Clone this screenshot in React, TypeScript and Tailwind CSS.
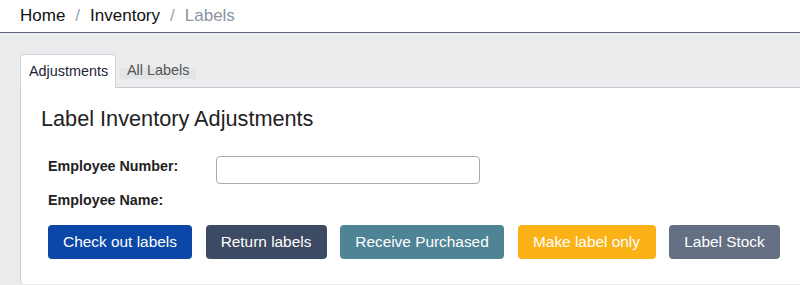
export default function App() {
  const buttons = [
    { label: "Check out labels", cls: "bg-[#0a47a6] w-[144px]" },
    { label: "Return labels", cls: "bg-[#3d4a63] w-[121px]" },
    { label: "Receive Purchased", cls: "bg-[#4f8396] w-[164px]" },
    { label: "Make label only", cls: "bg-[#fbb217] w-[138px]" },
    { label: "Label Stock", cls: "bg-[#656f84] w-[111px]" },
  ]

  return (
    <div className="w-[800px] h-[285px] overflow-hidden bg-[#ebecee] font-['Liberation_Sans',Arial,sans-serif]">
      <nav className="h-[33px] bg-white border-b border-[#5d6679] flex items-center pl-5 text-[17px] pb-px">
        <span className="text-[#111]">Home</span>
        <span className="text-[#9aa0aa] mx-[10px]">/</span>
        <span className="text-[#111]">Inventory</span>
        <span className="text-[#9aa0aa] mx-[10px]">/</span>
        <span className="text-[#8a93a3]">Labels</span>
      </nav>

      <div className="pl-5 pt-[21px]">
        <div className="flex items-end h-[34px] border-b border-[#c9cbcf]">
          <div className="h-[34px] w-[96px] -mb-px bg-white border border-b-0 border-[#d0d3d8] rounded-t-[4px] flex items-center pl-[8px] text-[14.4px] text-[#1e2535]">
            Adjustments
          </div>
          <div className="h-[33px] flex items-center pl-[4px] pb-[2px]">
            <span className="bg-[linear-gradient(to_bottom,transparent_40%,#e3e4e6_40%)] px-[7px] text-[14.4px] text-[#555] leading-[18px]">
              All Labels
            </span>
          </div>
        </div>

        <div className="h-[196px] bg-white border-l border-[#c9cbcf] rounded-bl-[4px] pl-[20px]">
          <h1 className="pt-[18px] text-[21.7px] leading-[26px] text-[#222]">
            Label Inventory Adjustments
          </h1>
          <div className="pl-[7px] pt-[24px]">
            <div className="flex items-start h-[28px]">
              <span className="w-[168px] text-[14.3px] leading-[20px] font-bold text-[#222]">
                Employee Number:
              </span>
              <input
                type="text"
                className="w-[264px] h-[28px] border border-[#aaa] rounded-[4px] bg-white outline-none px-2 text-sm"
              />
            </div>
            <div className="flex items-start h-[20px] mt-[6px]">
              <span className="w-[168px] text-[14.3px] leading-[20px] font-bold text-[#222]">
                Employee Name:
              </span>
            </div>
            <div className="flex gap-[13.5px] mt-[15px]">
              {buttons.map((b) => (
                <button
                  key={b.label}
                  className={`${b.cls} h-[34px] rounded-[4px] text-white text-[15.4px] flex items-center justify-center`}
                >
                  {b.label}
                </button>
              ))}
            </div>
          </div>
        </div>
      </div>
    </div>
  )
}
